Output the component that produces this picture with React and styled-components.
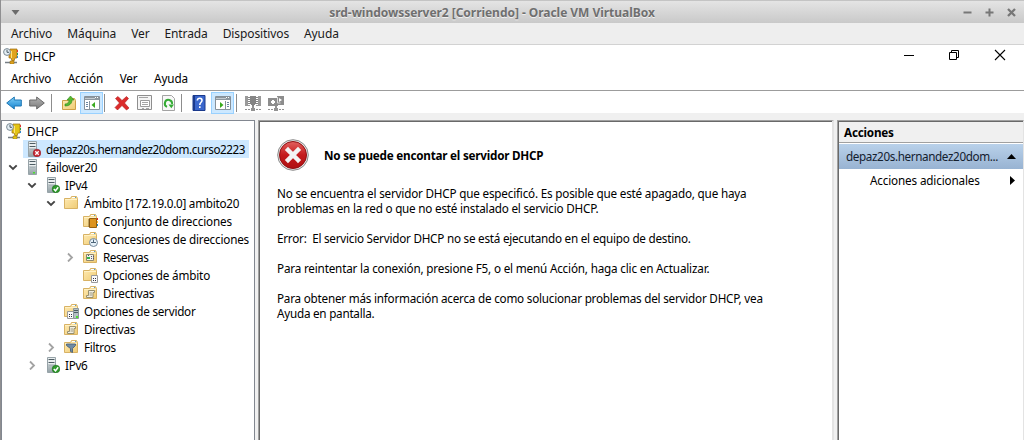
import React from 'react';
import styled, { createGlobalStyle, css } from 'styled-components';

const Global = createGlobalStyle`
  * { box-sizing: border-box; }
  body { margin: 0; background: #fff; overflow: hidden; }
  svg { display: block; flex: none; }
`;

const Screen = styled.div`
  width: 1024px;
  height: 440px;
  display: flex;
  flex-direction: column;
  background: #f0f0f0;
  border-left: 1px solid #8f8f91;
  font: 11.7px/15px "Noto Sans", "Open Sans", sans-serif;
  color: #000;
  white-space: nowrap;
  overflow: hidden;
`;

const Text = styled.span`
  letter-spacing: ${(p) => p.$ls || 0}px;
  white-space: pre;
`;

const HostTitle = styled.header`
  height: 23px;
  flex: none;
  display: flex;
  align-items: center;
  padding: 1px 7px 0 10px;
  border-top: 1px solid #c4c4c4;
  background: linear-gradient(#e4e4e4, #c9c9c9);
`;

const HostName = styled.div`
  flex: 1;
  padding-left: 2px;
  text-align: center;
  font-size: 12px;
  font-weight: 700;
  color: #6f6f6f;
  text-shadow: 0 1px 0 #f0f0f0;
`;

const HostButtons = styled.div`
  display: flex;
  gap: 11px;
`;

const HostMenu = styled.nav`
  height: 22px;
  flex: none;
  display: flex;
  align-items: center;
  gap: 15px;
  padding: 0 10px;
  background: #eeeeee;
  border-bottom: 1px solid #d2d2d2;
  font-size: 12px;
  color: #1a1a1a;
`;

const AppTitle = styled.div`
  height: 22px;
  flex: none;
  display: flex;
  align-items: center;
  padding: 0 18px 0 2px;
  background: #fff;
`;

const AppName = styled.div`
  flex: 1;
  padding-left: 5px;
`;

const AppButtons = styled.div`
  display: flex;
  gap: 34px;
  margin-top: -2px;
`;

const AppMenu = styled.nav`
  height: 23px;
  flex: none;
  display: flex;
  align-items: center;
  gap: 16.5px;
  padding: 0 10px;
  background: #fff;
`;

const Toolbar = styled.div`
  height: 23px;
  flex: none;
  display: flex;
  align-items: center;
  padding-left: 5px;
  padding-top: 1px;
  background: #fff;
  border-top: 1px solid #9c9c9c;
`;

const Forward = styled.div`
  margin-left: 7px;
`;

const Tool = styled.div`
  width: ${(p) => p.$w || 23}px;
  height: 22px;
  display: flex;
  align-items: center;
  justify-content: center;
  border: 1px solid transparent;
  ${(p) => p.$pressed && css`
    background: #cce8ff;
    border-color: #99d1ff;
  `}
`;

const Separator = styled.div`
  width: 1px;
  height: 18px;
  margin: 0 ${(p) => p.$after}px 0 ${(p) => p.$before}px;
  background: #8d8d8d;
`;

const Panes = styled.main`
  flex: 1;
  display: flex;
  padding-top: 7px;
  min-height: 0;
`;

const TreePane = styled.section`
  width: 254px;
  flex: none;
  margin-right: 3px;
  padding-top: 1px;
  background: #fff;
  border: 1px solid #828790;
  border-bottom: 0;
`;

const TreeRow = styled.div`
  height: 18px;
  display: flex;
  align-items: center;
  padding-left: ${(p) => p.$level * 19 - 16}px;
`;

const RootRow = styled(TreeRow)`
  padding-left: 4px;
`;

const Arrow = styled.span`
  width: 16px;
  flex: none;
  margin-right: 4px;
  display: flex;
  justify-content: center;
`;

const Node = styled.div`
  height: 18px;
  flex: none;
  display: flex;
  align-items: center;
  gap: 5px;
  ${(p) => p.$selected && css`
    width: 226px;
    margin-left: -2px;
    padding-left: 2px;
    background: #cde8ff;
  `}
`;

const Detail = styled.section`
  width: 576px;
  flex: none;
  margin-right: 3px;
  padding: 18px 18px 0;
  background: #fff;
  border: solid;
  border-width: 1px 2px 0 1px;
  border-color: #a0a0a0 #e3e3e3 #fff #a0a0a0;
  box-shadow: inset 1px 1px 0 #696969;
`;

const ErrorHead = styled.div`
  display: flex;
  align-items: center;
  gap: 15px;
  height: 32px;
  margin-bottom: 15px;
  font-weight: 700;
`;

const Paragraph = styled.p`
  margin: 0 0 15px;
`;

const Line = styled.div`
  height: 15px;
`;

const Actions = styled.section`
  flex: 1;
  min-width: 0;
  padding: 1px 0 0 1px;
  background: #fff;
  border: solid;
  border-width: 1px 1px 0 1px;
  border-color: #a0a0a0 #e3e3e3 #fff #a0a0a0;
  box-shadow: inset 1px 1px 0 #696969;
`;

const ActionsHead = styled.div`
  height: 21px;
  padding: 3px 5px;
  background: #f0f0f0;
  border-bottom: 1px solid #a0a0a0;
  font-weight: 700;
`;

const ActionsGroup = styled.div`
  height: 25px;
  margin-top: 1px;
  display: flex;
  align-items: center;
  justify-content: space-between;
  padding: 0 7px;
  background: linear-gradient(#b9d1ea, #98b3d2);
  color: #14202e;
`;

const ActionItem = styled.div`
  height: 23px;
  display: flex;
  align-items: center;
  justify-content: space-between;
  padding: 0 8px 0 31px;
`;

const Svg = ({ s = 16, children }) => (
  <svg width={s} height={s} viewBox={`0 0 ${s} ${s}`}>{children}</svg>
);

const DhcpIcon = ({ fill = '#e0a21c' }) => (
  <Svg>
    <path d="M7 1h7v9h-2l-1 3H9l-1-3H6V6z" fill={fill} stroke="#9a6a10" strokeWidth=".7" />
    <path d="M8.500 3v7" stroke="#ffe27a" />
    <path d="M14 2h1v2h-1z" fill="#d33" />
    <path d="M14 5h1v2h-1z" fill="#2a9a4a" />
    <path d="M14 8h1v2h-1z" fill="#38c" />
    <path d="M2 14.500h12" stroke="#777f86" strokeWidth="1.500" />
    <path d="M7 13h4v3H7z" fill={fill} stroke="#8a6a1a" strokeWidth=".5" />
    <circle cx="4" cy="4" r="3.400" fill="#e4eef4" stroke="#7d8b95" />
    <path d="M4 1.800V4.300H6" fill="none" stroke="#4a5a66" />
  </Svg>
);

const Server = () => (
  <>
    <path d="M3.500.5h8v15h-8z" fill="url(#srv)" stroke="#97a3a8" />
    <path d="M4 1h7v6H4z" fill="#e9eeef" />
    <path d="M4.500 2.500h6M4.500 5.500h6" stroke="#4e5d64" />
    <path d="M5 8.500h5" stroke="#aab5b9" />
  </>
);

const ServerIcon = ({ badge }) => (
  <Svg>
    <Server />
    {!badge && <path d="M8 13h2v1.500H8z" fill="#4be02c" />}
    {badge === 'error' && (
      <>
        <circle cx="12" cy="12" r="3.800" fill="#c92a35" stroke="#8f1620" strokeWidth=".6" />
        <path d="M10.300 10.300l3.400 3.400M13.700 10.300l-3.400 3.400" stroke="#fff" strokeWidth="1.300" />
      </>
    )}
    {badge === 'ok' && (
      <>
        <circle cx="12" cy="12" r="3.800" fill="#2f9a2c" stroke="#146b14" strokeWidth=".6" />
        <path d="M9.800 12l1.700 1.800 2.700-3.500" fill="none" stroke="#fff" strokeWidth="1.400" />
      </>
    )}
  </Svg>
);

const FolderIcon = ({ kind }) => (
  <Svg>
    <path d="M1.500 13.500v-10h6l1-2h5l1 2v10z" fill="url(#fld)" stroke="#d8b264" />
    <path d="M9 2.500h3" stroke="#fff" />
    <path d="M12 2.500h1" stroke="#4b9fd8" />
    <path d="M2 4.500h12" stroke="#fff1c4" />
    {kind === 'pool' && (
      <>
        <path d="M7.500 5.500h7v9h-7z" fill="#dc9420" stroke="#95600f" />
        <path d="M6 7h2M6 9h2M6 11h2M6 13h2" stroke="#705020" strokeWidth=".8" />
        <path d="M15 5h1v2h-1z" fill="#d22" />
        <path d="M15 8h1v2h-1z" fill="#fb3" />
        <path d="M15 11h1v2h-1z" fill="#28b" />
      </>
    )}
    {kind === 'lease' && (
      <>
        <circle cx="11.500" cy="11.500" r="4" fill="#e5f0f8" stroke="#75899b" />
        <path d="M11.500 8.500v3.500M9 11.500h5" stroke="#4c6478" fill="none" />
      </>
    )}
    {kind === 'reserve' && (
      <>
        <path d="M4.500 5.500h7v6h-7z" fill="#f2f2ec" stroke="#8d8670" />
        <path d="M5 8h3v2H5z" fill="#35b34a" />
        <path d="M9 7h1v1H9zM11 7h1v1h-1zM9 9h1v1H9zM11 9h1v1h-1zM6 6h1v1H6z" fill="#557" />
      </>
    )}
    {(kind === 'options' || kind === 'server') && (
      <>
        <path d={kind === 'server' ? 'M4.500 8.500h6v7h-6z' : 'M9.500 8.500h6v7h-6z'} fill="#fafafa" stroke="#9a9a9a" />
        <path
          d={kind === 'server' ? 'M6 11h1v1H6zM8 11h1v1H8zM6 13h1v1H6zM8 13h1v1H8z' : 'M11 11h1v1h-1zM13 11h1v1h-1zM11 13h1v1h-1zM13 13h1v1h-1z'}
          fill="#334"
        />
      </>
    )}
    {kind === 'server' && (
      <>
        <path d="M10.500 5.500h5v10h-5z" fill="#b5c0c4" stroke="#8b979c" />
        <path d="M11 7.500h4M11 9.500h4" stroke="#4e5d64" />
        <path d="M13 13h2v2h-2z" fill="#4be02c" />
      </>
    )}
    {kind === 'policy' && (
      <>
        <path d="M6.500 5.500h6v2h-1.500v5H4.500v-2h2z" fill="#f1eee2" stroke="#98906f" />
        <path d="M7.500 8h2.500M7.500 10h2.500" stroke="#8a8468" strokeWidth=".8" />
      </>
    )}
    {kind === 'filter' && (
      <path d="M3.500 5h9v1.500L9.500 9.500v4l-2-1v-3L3.500 6.500z" fill="#6f8ba4" stroke="#4a6178" strokeWidth=".9" />
    )}
  </Svg>
);

const Chevron = ({ open }) => (
  <svg width="10" height="10" viewBox="0 0 10 10">
    {open
      ? <path d="M1.300 3.300l3.700 3.700 3.700-3.700" fill="none" stroke="#444" strokeWidth="1.900" />
      : <path d="M3 1.500l4 4-4 4" fill="none" stroke="#a3a3a3" strokeWidth="1.800" />}
  </svg>
);

const Fwd = ({ fill, stroke }) => (
  <path d="M.7 5h7V2l7.600 6-7.600 6v-3h-7z" fill={fill} stroke={stroke} strokeLinejoin="round" />
);

const ConsoleIcon = ({ right }) => (
  <svg width="16" height="14" viewBox="0 0 16 14">
    <path d="M.5.500h15v13H.5z" fill="#fff" stroke="#87919a" />
    <path d="M1 1h14v3H1z" fill="#8d979f" />
    <path d="M1 2.500h10" stroke="#c3cad0" />
    <path d="M11 1h1v1h-1zM13 1h1v1h-1z" fill="#fff" />
    <path d={right ? 'M10.500 5v8' : 'M5.500 5v8'} stroke="#87919a" />
    <path d={right ? 'M12 6.500h2M12 8.500h2M12 10.500h2' : 'M2 6.500h2M2 8.500h2M2 10.500h2'} stroke="#6a87a3" />
    <path d={right ? 'M5 6v6l3.500-3z' : 'M11 6v6L7.500 9z'} fill="#3aaa1e" />
  </svg>
);

const MonitorStand = () => (
  <path d="M0 14h2v1H0zM3 14h2v1H3zM11 14h2v1h-2zM14 14h2v1h-2zM7 11h2v2h1v3H6v-3h1z" fill="#929292" />
);

const tree = [
  { level: 1, icon: <ServerIcon badge="error" />, label: 'depaz20s.hernandez20dom.curso2223', ls: -0.41, selected: true },
  { level: 1, arrow: 'open', icon: <ServerIcon />, label: 'failover20', ls: -0.3 },
  { level: 2, arrow: 'open', icon: <ServerIcon badge="ok" />, label: 'IPv4', ls: -0.3 },
  { level: 3, arrow: 'open', icon: <FolderIcon />, label: 'Ámbito [172.19.0.0] ambito20', ls: -0.25 },
  { level: 4, icon: <FolderIcon kind="pool" />, label: 'Conjunto de direcciones', ls: -0.15 },
  { level: 4, icon: <FolderIcon kind="lease" />, label: 'Concesiones de direcciones', ls: -0.19 },
  { level: 4, arrow: 'closed', icon: <FolderIcon kind="reserve" />, label: 'Reservas', ls: -0.45 },
  { level: 4, icon: <FolderIcon kind="options" />, label: 'Opciones de ámbito', ls: -0.18 },
  { level: 4, icon: <FolderIcon kind="policy" />, label: 'Directivas', ls: -0.26 },
  { level: 3, icon: <FolderIcon kind="server" />, label: 'Opciones de servidor', ls: -0.24 },
  { level: 3, icon: <FolderIcon kind="policy" />, label: 'Directivas', ls: -0.26 },
  { level: 3, arrow: 'closed', icon: <FolderIcon kind="filter" />, label: 'Filtros', ls: -0.25 },
  { level: 2, arrow: 'closed', icon: <ServerIcon badge="ok" />, label: 'IPv6', ls: -0.3 },
];

const Hidden = styled.svg`
  position: absolute;
`;

const Defs = () => (
  <Hidden width="0" height="0">
    <defs>
      <linearGradient id="srv" x1="0" y1="0" x2="0" y2="1">
        <stop offset="0" stopColor="#e6ebec" /><stop offset="1" stopColor="#93a1a6" />
      </linearGradient>
      <linearGradient id="fld" x1="0" y1="0" x2="1" y2="1">
        <stop offset="0" stopColor="#ffebb5" /><stop offset="1" stopColor="#efcb74" />
      </linearGradient>
      <linearGradient id="blue" x1="0" y1="0" x2="0" y2="1">
        <stop offset="0" stopColor="#7fd0f8" /><stop offset="1" stopColor="#1583cf" />
      </linearGradient>
      <linearGradient id="gray" x1="0" y1="0" x2="0" y2="1">
        <stop offset="0" stopColor="#b4b4b4" /><stop offset="1" stopColor="#7c7c7c" />
      </linearGradient>
      <linearGradient id="red" x1="0" y1="0" x2="0" y2="1">
        <stop offset="0" stopColor="#e2605f" /><stop offset=".5" stopColor="#c41a1c" /><stop offset="1" stopColor="#b01012" />
      </linearGradient>
    </defs>
  </Hidden>
);

export default function App() {
  return (
    <Screen>
      <Global />
      <Defs />
      <HostTitle>
        <svg width="9" height="6" viewBox="0 0 9 6"><path d="M.5 0h8l-4 5z" fill="#6b6b6b" /></svg>
        <HostName><Text $ls={-0.04}>srd-windowsserver2 [Corriendo] - Oracle VM VirtualBox</Text></HostName>
        <HostButtons>
          <Svg s={11}><path d="M1.500 5.500h8" stroke="#777" strokeWidth="2" /></Svg>
          <Svg s={11}><path d="M1.500 5.500h8M5.500 1.500v8" stroke="#777" strokeWidth="2" /></Svg>
          <Svg s={11}><path d="M2 2l7 7M9 2l-7 7" stroke="#777" strokeWidth="2.300" /></Svg>
        </HostButtons>
      </HostTitle>
      <HostMenu>
        {['Archivo', 'Máquina', 'Ver', 'Entrada', 'Dispositivos', 'Ayuda'].map((t) => <Text key={t} $ls={-0.11}>{t}</Text>)}
      </HostMenu>
      <AppTitle>
        <DhcpIcon />
        <AppName><Text>DHCP</Text></AppName>
        <AppButtons>
          <Svg s={12}><path d="M2 6.500h10" stroke="#000" /></Svg>
          <Svg s={12}><path d="M1.500 3.500h7v7h-7zM3.500 3V1.500h7v7H9" fill="none" stroke="#000" /></Svg>
          <Svg s={12}><path d="M1 1l10 10M11 1L1 11" stroke="#000" strokeWidth="1.100" /></Svg>
        </AppButtons>
      </AppTitle>
      <AppMenu>
        {['Archivo', 'Acción', 'Ver', 'Ayuda'].map((t) => <Text key={t} $ls={-0.1}>{t}</Text>)}
      </AppMenu>
      <Toolbar>
        <Svg><g transform="matrix(-1 0 0 1 16 0)"><Fwd fill="url(#blue)" stroke="#1e77b5" /></g></Svg>
        <Forward><Svg><Fwd fill="url(#gray)" stroke="#6a6a6a" /></Svg></Forward>
        <Separator $before={6} $after={5} />
        <Tool>
          <Svg>
            <path d="M1.500 14.500v-9h6l1-2h5l1 2v9z" fill="url(#fld)" stroke="#cfa046" />
            <path d="M4 9c3 0 4-2 4-4H6l3.500-4L13 5h-2c0 4-3 6-7 6z" fill="#58b830" stroke="#2f8a1c" strokeWidth=".6" />
          </Svg>
        </Tool>
        <Tool $pressed><ConsoleIcon /></Tool>
        <Separator $before={1} $after={5} />
        <Tool>
          <Svg><path d="M1.500 3.500l2.500-2L8 5.500l4.500-4 2 2L10.500 8l4.500 5-2.500 2L8 10.500 3.500 15 1 12.500 5.500 8z" fill="#dc2c2c" stroke="#b01818" strokeWidth=".6" /></Svg>
        </Tool>
        <Tool>
          <Svg>
            <path d="M.5.5h14v14H.5z" fill="#f5f5f5" stroke="#8e8e8e" />
            <path d="M3.500 5.500h9v6h-9z" fill="#fff" stroke="#9b9b9b" />
            <path d="M2 2.500h9M5 7.500h6M5 9.500h6M5 13.500h2M9 13.500h3" stroke="#a5a5a5" />
          </Svg>
        </Tool>
        <Tool>
          <Svg>
            <path d="M2.500.5h9l3 3v12h-12z" fill="#f8f8f8" stroke="#a3a3a3" />
            <path d="M7 11.800A3.600 3.600 0 1 1 12 9" fill="none" stroke="#35ab35" strokeWidth="2" />
            <path d="M8.500 9.500H14l-2.700 3.800z" fill="#35ab35" />
          </Svg>
        </Tool>
        <Separator $before={2} $after={4} />
        <Tool $w={25}>
          <Svg>
            <path d="M2 .5h12v15H2z" fill="#3a66cc" stroke="#1b3a8c" />
            <path d="M2 1h2v14H2z" fill="#1b3a8c" />
            <path d="M6.300 5.500Q6.500 3.300 8.800 3.300T11 5.600C11 7.300 8.800 7.300 8.800 10M8.800 11.300v1.700" fill="none" stroke="#fff" strokeWidth="1.600" />
          </Svg>
        </Tool>
        <Tool $pressed><ConsoleIcon right /></Tool>
        <Separator $before={2} $after={4} />
        <Tool>
          <Svg>
            <path d="M0 1h3v9h2v1H0zM13 1h3v10h-5v-1h2z" fill="#9a9a9a" />
            <path d="M5 1h6v8h-1v1H9v1H7v-1H6V9H5z" fill="#858585" />
            <path d="M3 2h2v1H3zM3 4h2v1H3zM3 6h2v1H3zM3 8h2v1H3zM11 2h2v1h-2zM11 4h2v1h-2zM11 6h2v1h-2zM11 8h2v1h-2z" fill="#858585" />
            <MonitorStand />
          </Svg>
        </Tool>
        <Tool>
          <Svg>
            <path d="M0 3h10v8H0zM9 1h7v9H9z" fill="#8d8d8d" />
            <path d="M9.500 2v6h3" stroke="#ddd" fill="none" />
            <path d="M3 6h1V5h2v1h1v2H6v1H4V8H3zM11 3l3 2-3 2z" fill="#fff" />
            <MonitorStand />
          </Svg>
        </Tool>
      </Toolbar>
      <Panes>
        <TreePane>
          <RootRow><Node><DhcpIcon fill="#e2c416" /><Text>DHCP</Text></Node></RootRow>
          {tree.map((n, i) => (
            <TreeRow key={i} $level={n.level}>
              <Arrow>{n.arrow && <Chevron open={n.arrow === 'open'} />}</Arrow>
              <Node $selected={n.selected}>{n.icon}<Text $ls={n.ls}>{n.label}</Text></Node>
            </TreeRow>
          ))}
        </TreePane>
        <Detail>
          <ErrorHead>
            <Svg s={32}>
              <circle cx="16" cy="16" r="15.300" fill="#e8e8e8" stroke="#8a8a8a" />
              <circle cx="16" cy="16" r="13.500" fill="url(#red)" stroke="#8e1012" />
              <path d="M11 11l10 10M21 11L11 21" stroke="#f3f3f3" strokeWidth="4.500" strokeLinecap="square" />
            </Svg>
            <Text $ls={-0.23}>No se puede encontar el servidor DHCP</Text>
          </ErrorHead>
          <Paragraph>
            <Line><Text $ls={-0.19}>No se encuentra el servidor DHCP que especificó. Es posible que esté apagado, que haya</Text></Line>
            <Line><Text $ls={-0.21}>problemas en la red o que no esté instalado el servicio DHCP.</Text></Line>
          </Paragraph>
          <Paragraph><Line><Text $ls={-0.235}>{'Error:  El servicio Servidor DHCP no se está ejecutando en el equipo de destino.'}</Text></Line></Paragraph>
          <Paragraph><Line><Text $ls={-0.176}>Para reintentar la conexión, presione F5, o el menú Acción, haga clic en Actualizar.</Text></Line></Paragraph>
          <Paragraph>
            <Line><Text $ls={-0.218}>Para obtener más información acerca de como solucionar problemas del servidor DHCP, vea</Text></Line>
            <Line><Text $ls={-0.24}>Ayuda en pantalla.</Text></Line>
          </Paragraph>
        </Detail>
        <Actions>
          <ActionsHead><Text $ls={-0.2}>Acciones</Text></ActionsHead>
          <ActionsGroup>
            <Text $ls={-0.38}>depaz20s.hernandez20dom...</Text>
            <svg width="9" height="5" viewBox="0 0 9 5"><path d="M0 5l4.500-5L9 5z" /></svg>
          </ActionsGroup>
          <ActionItem>
            <Text $ls={-0.15}>Acciones adicionales</Text>
            <svg width="5" height="9" viewBox="0 0 5 9"><path d="M0 0l5 4.500L0 9z" /></svg>
          </ActionItem>
        </Actions>
      </Panes>
    </Screen>
  );
}
